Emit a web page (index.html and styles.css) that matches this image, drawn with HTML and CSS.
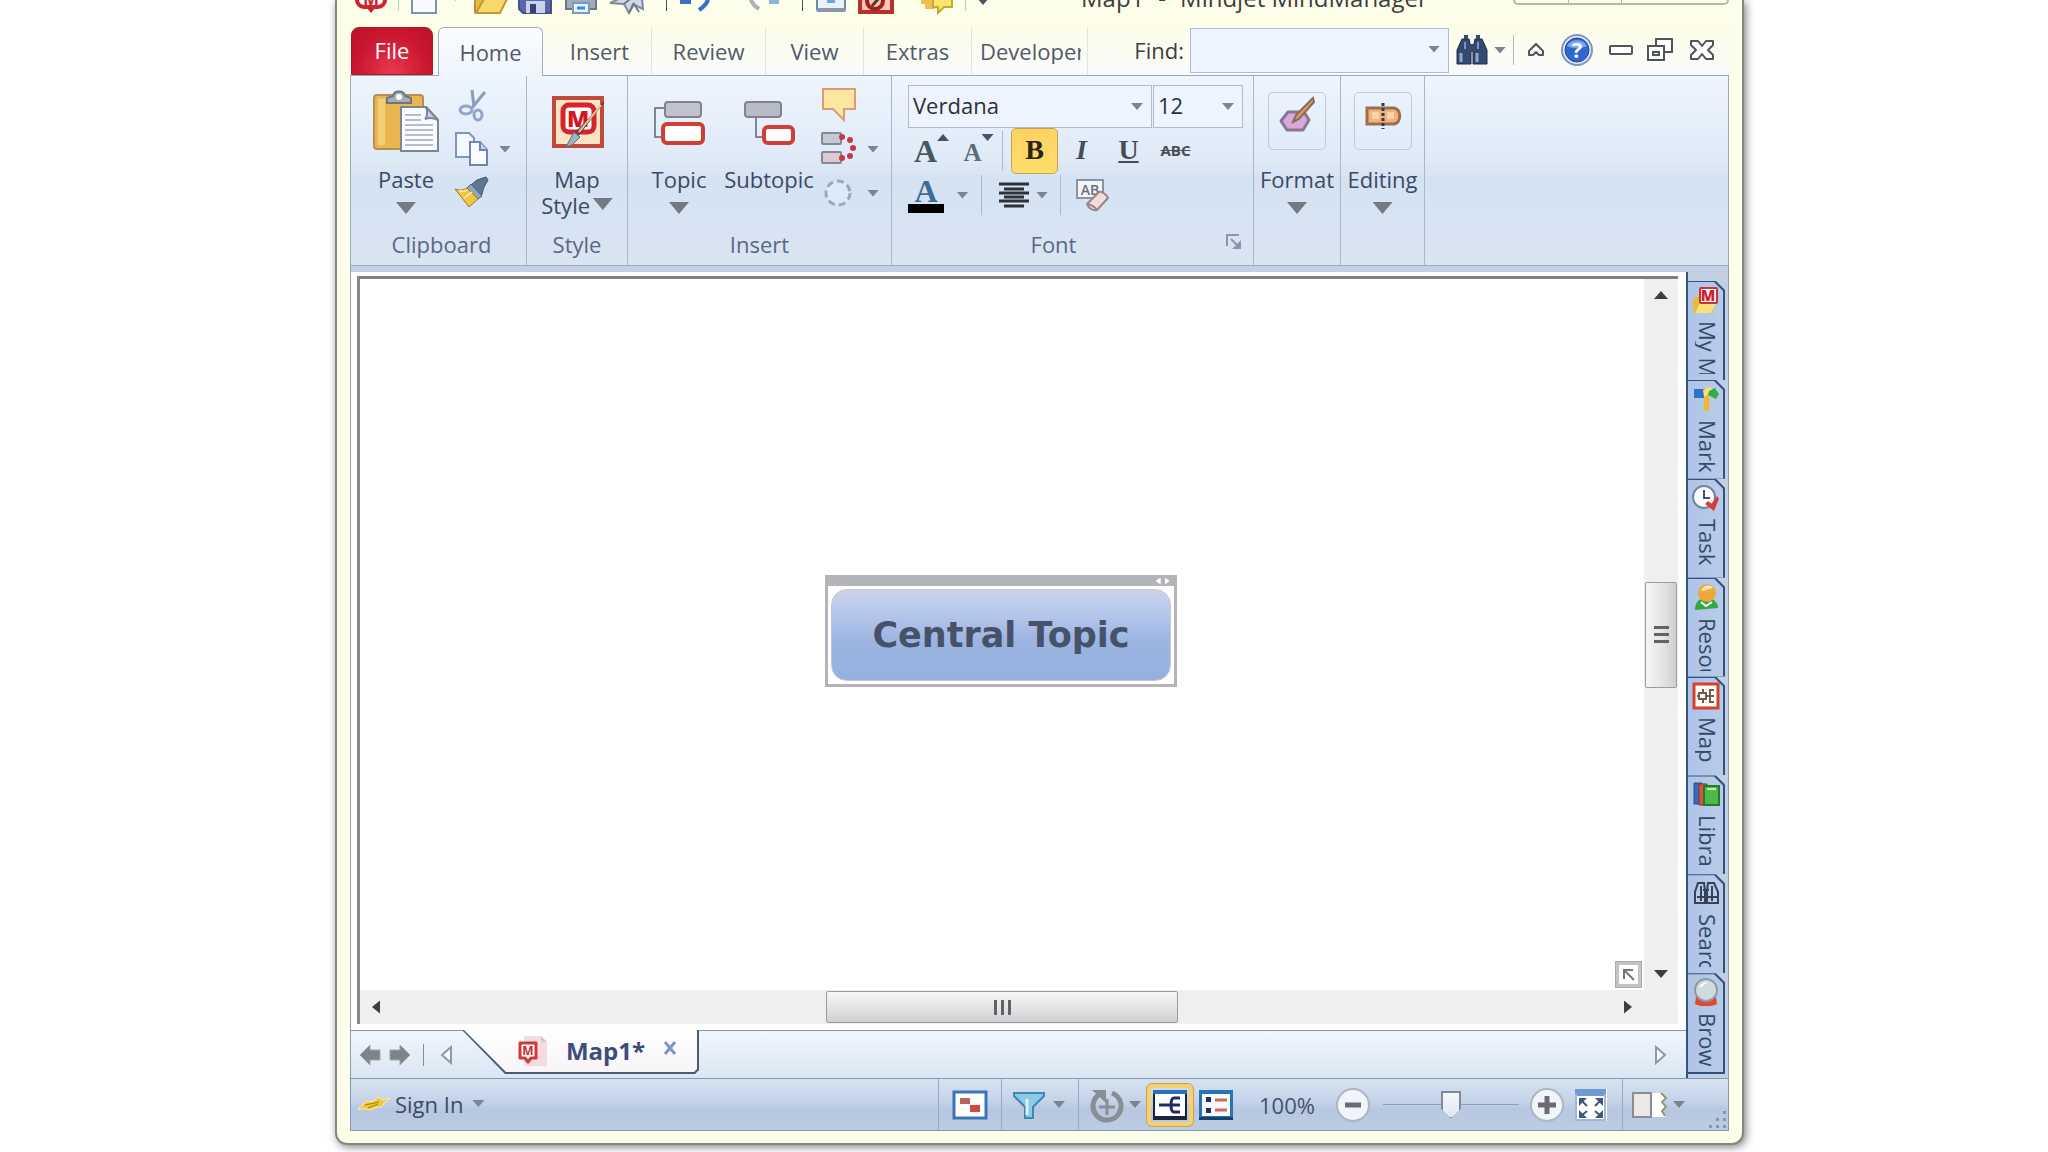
FILE: index.html
```html
<!DOCTYPE html>
<html lang="en">
<head>
  <meta charset="UTF-8" />
  <meta name="viewport" content="width=device-width, initial-scale=1" />
  <title>Map1 - Mindjet MindManager</title>
  <link rel="stylesheet" href="styles.css">
</head>
<body>
  <div class="window">

    <header class="titlebar">
      <div class="quick">
        <button aria-label="MindManager"><svg width="32" height="32" viewBox="0 0 32 32"><rect x="2" y="2" width="28" height="22" rx="7" fill="#fff" stroke="#d0242c" stroke-width="4"/><path d="M11 24l5 6 5-6" fill="#d0242c"/><text x="16" y="22" text-anchor="middle" font-family="Open Sans, sans-serif" font-weight="700" font-size="17" fill="#d0242c">M</text></svg></button>
        <i class="tick"></i>
        <button aria-label="New"><svg width="28" height="32" viewBox="0 0 28 32"><path d="M2 1h17l7 7v22H2z" fill="#f7fafe" stroke="#7d93b4" stroke-width="2"/></svg></button>
        <i class="tick space"></i>
        <button aria-label="Open"><svg width="36" height="32" viewBox="0 0 36 32"><path d="M2 30V8h9l3 4h15v6" fill="#e6b93e" stroke="#b9913a" stroke-width="2"/><path d="M3 30l8-14h23l-7 14z" fill="#f7d86b" stroke="#c29a34" stroke-width="2"/></svg></button>
        <button aria-label="Save"><svg width="36" height="32" viewBox="0 0 36 32"><path d="M2 1h32v29H6l-4-4z" fill="#5b68a6" stroke="#46508a" stroke-width="2"/><path d="M9 18h19v12H9z" fill="#c9d2e8"/><path d="M13 21h6v9h-6z" fill="#38427a"/></svg></button>
        <button class="gap-s" aria-label="Print"><svg width="34" height="32" viewBox="0 0 34 32"><path d="M2 14h30v12H2z" fill="#a3abb8" stroke="#6e7787" stroke-width="2"/><path d="M9 20h16v10H9z" fill="#e4f1ff" stroke="#7d98b8" stroke-width="2"/><path d="M13 25h8" stroke="#3d8bd0" stroke-width="3"/></svg></button>
        <button class="gap-s" aria-label="Send"><svg width="36" height="32" viewBox="0 0 36 32"><path d="M1 20L32 6l2 20-10-5-4 9-5-9z" fill="#d3d9e2" stroke="#7e8a9b" stroke-width="2"/><path d="M15 21L31 8M20 30l5-9 5 8" stroke="#6c7a8d" stroke-width="2" fill="none"/></svg></button>
        <i class="tick dark"></i>
        <button aria-label="Undo"><svg width="34" height="32" viewBox="0 0 34 32"><path d="M4 17c8-9 30-9 24 2-2 4-5 6-8 8" fill="none" stroke="#3c6cc4" stroke-width="4"/><path d="M1 19h11" stroke="#3c6cc4" stroke-width="4"/></svg></button>
        <button class="gap-l" aria-label="Redo"><svg width="34" height="32" viewBox="0 0 34 32"><path d="M30 17C20 8 0 10 5 19c2 4 4 5 7 7" fill="none" stroke="#a9b2bd" stroke-width="4"/><path d="M22 19h10" stroke="#8eb0dd" stroke-width="4"/></svg></button>
        <i class="tick dark"></i>
        <button aria-label="Send to"><svg width="32" height="32" viewBox="0 0 32 32"><rect x="2" y="2" width="28" height="26" rx="2" fill="#e9f1fa" stroke="#7389a5" stroke-width="2"/><path d="M2 25h28v4H2z" fill="#8898ac"/><path d="M12 14h8v6h-8z" fill="#6fa0d6"/></svg></button>
        <button class="gap-s" aria-label="Map style"><svg width="36" height="32" viewBox="0 0 36 32"><rect x="2" y="1" width="32" height="28" fill="#f7c6b8" stroke="#b92f2c" stroke-width="4"/><circle cx="17" cy="18" r="8" fill="none" stroke="#a32020" stroke-width="4"/><path d="M14 23L30 5" stroke="#5e3a2a" stroke-width="3"/></svg></button>
        <button class="gap-m" aria-label="Comments"><svg width="34" height="32" viewBox="0 0 34 32"><path d="M1 12h14v14H5v-5H1z" fill="#f2bd52"/><path d="M13 14h19v10h-8l-6 6v-6h-5z" fill="#fbe66a" stroke="#c9a838" stroke-width="2"/></svg></button>
        <i class="tick"></i>
        <button class="arrow-btn" aria-label="Customize"><i class="arrow dark"></i></button>
      </div>
      <div class="title"><span>Map1</span><span>-</span><span>Mindjet MindManager</span></div>
      <div class="caption-buttons"><button aria-label="Minimize"></button><button aria-label="Maximize"></button><button aria-label="Close"></button></div>
    </header>

    <div class="tabrow">
      <nav class="tabs">
        <button class="tab file">File</button>
        <button class="tab active">Home</button>
        <button class="tab">Insert</button>
        <button class="tab">Review</button>
        <button class="tab">View</button>
        <button class="tab">Extras</button>
        <button class="tab clipped"><span>Developer</span></button>
      </nav>
      <div class="find">
        <label for="find">Find:</label>
        <div class="combo"><input id="find" type="text"><i class="arrow"></i></div>
      </div>
      <div class="window-tools">
        <button aria-label="Search"><svg width="32" height="32" viewBox="0 0 32 32"><path d="M6 5h7l2 9v16H1V16zM19 5h7l5 11v14H17V14z" fill="#33496f" stroke="#1f2d48" stroke-width="1"/><path d="M8 1h4v4H8zM20 1h4v4h-4zM13 10h6v8h-6z" fill="#33496f"/><path d="M5 19v9M21 19v9" stroke="#8fa9cf" stroke-width="3"/><path d="M9 8v7M22 8v7" stroke="#7c96bd" stroke-width="2"/></svg></button>
        <button class="arrow-btn" aria-label="Search options"><i class="arrow"></i></button>
        <i class="bar"></i>
        <button class="collapse" aria-label="Collapse ribbon"><svg width="18" height="14" viewBox="0 0 18 14"><path d="M9 1l7 7v4h-4L9 9l-3 3H2V8z" fill="#fff" stroke="#50555c" stroke-width="2" stroke-linejoin="round"/></svg></button>
        <button class="help" aria-label="Help"><svg width="32" height="34" viewBox="0 0 32 34"><circle cx="16" cy="17" r="15" fill="#dfe9f8" stroke="#8295b8" stroke-width="2"/><circle cx="16" cy="17" r="12" fill="#2f66cf" stroke="#1f4aa8" stroke-width="1"/><path d="M6 13a11 10 0 0 1 20 0c-6 3-14 3-20 0" fill="#7da5ec"/><text x="16" y="25" text-anchor="middle" font-family="Open Sans, sans-serif" font-weight="700" font-size="22" fill="#fff">?</text></svg></button>
        <button class="min" aria-label="Minimize map"><svg width="24" height="12" viewBox="0 0 24 12"><rect x="1" y="2" width="22" height="8" rx="1" fill="#fff" stroke="#50555c" stroke-width="2"/></svg></button>
        <button class="restore" aria-label="Restore map"><svg width="26" height="26" viewBox="0 0 26 26"><path d="M9 2h16v13H9z" fill="#fff" stroke="#50555c" stroke-width="2"/><path d="M1 9h16v14H1z" fill="#fff" stroke="#50555c" stroke-width="2"/><path d="M6 15h6v3H6z" fill="#fff" stroke="#50555c" stroke-width="2"/></svg></button>
        <button class="close" aria-label="Close map"><svg width="26" height="22" viewBox="0 0 26 22"><path d="M2 2h7l4 5 4-5h7v4l-5 5 5 5v4h-7l-4-5-4 5H2v-4l5-5-5-5z" fill="#fff" stroke="#50555c" stroke-width="2" stroke-linejoin="round"/></svg></button>
      </div>
    </div>

    <div class="ribbon">
      <section class="group clipboard">
        <div class="group-body">
          <button class="big">
            <svg width="66" height="64" viewBox="0 0 66 64"><rect x="1" y="5" width="49" height="54" rx="3" fill="#eab650" stroke="#b38f52" stroke-width="2"/><path d="M5 9h7v46H5z" fill="#f4cd79"/><path d="M14 13V8l6-2c1-6 11-6 12 0l6 2v5z" fill="#a9adb8" stroke="#70747f" stroke-width="2"/><circle cx="26" cy="7" r="3" fill="#fff"/><path d="M28 17h25l12 13v31H28z" fill="#f8fbff" stroke="#7a8599" stroke-width="2"/><path d="M53 17c2 5 1 10-1 12 5-2 9-1 13 1z" fill="#c3d0e2" stroke="#7a8599" stroke-width="2"/><path d="M32 25h16M32 30h16M32 35h28M32 40h28M32 45h28M32 50h28M32 55h28" stroke="#b7bec9" stroke-width="2"/></svg>
            <span>Paste</span>
            <i class="arrow large"></i>
          </button>
          <div class="small-tools">
            <div class="row"><button aria-label="Cut"><svg width="36" height="34" viewBox="0 0 36 34"><path d="M19 2l2 17M32 4L18 21" stroke="#8b9dbd" stroke-width="3"/><ellipse cx="13" cy="22" rx="6" ry="4" fill="none" stroke="#93a6c8" stroke-width="3"/><ellipse cx="25" cy="27" rx="4" ry="5" fill="none" stroke="#93a6c8" stroke-width="3"/></svg></button></div>
            <div class="row"><button aria-label="Copy"><svg width="36" height="36" viewBox="0 0 36 36"><path d="M3 2h13l5 5v19H3z" fill="#f5f9ff" stroke="#7f97bb" stroke-width="2"/><path d="M17 11h10l7 8v15H17z" fill="#f8fbff" stroke="#6f87b0" stroke-width="2"/><path d="M27 11v8h7" fill="#c4d3ea" stroke="#6f87b0" stroke-width="2"/></svg></button><button class="arrow-btn" aria-label="Copy options"><i class="arrow"></i></button></div>
            <div class="row"><button aria-label="Format painter"><svg width="36" height="34" viewBox="0 0 36 34"><path d="M18 9l6-5 9-3 2 3-4 7-3 10z" fill="#5d7795" stroke="#40546f" stroke-width="1"/><path d="M18 8l11 12-4 3L14 12z" fill="#8fa4bd" stroke="#4f6076" stroke-width="1"/><path d="M14 12l11 11-9 8L2 13c5 2 8 1 12-1z" fill="#f0c544" stroke="#9b7b23" stroke-width="1"/><path d="M6 15c4 1 6 0 8-1M11 22l8-6" stroke="#fbe79a" stroke-width="2" fill="none"/></svg></button></div>
          </div>
        </div>
        <div class="group-name"><span>Clipboard</span></div>
      </section>

      <section class="group style">
        <div class="group-body">
          <button class="big">
            <svg width="56" height="58" viewBox="0 0 56 58"><rect x="5" y="5" width="48" height="48" fill="#fbe5c4" stroke="#bf4a3c" stroke-width="4"/><rect x="14" y="12" width="31" height="27" rx="6" fill="#fff" stroke="#d9232b" stroke-width="5"/><text x="29" y="34" text-anchor="middle" font-family="Open Sans, sans-serif" font-weight="800" font-size="23" fill="#d9151f">M</text><path d="M55 9L29 43l-5 4 2-7z" fill="#7a4a3a" stroke="#4e3630" stroke-width="1"/><path d="M52 12L30 39" stroke="#e7c08e" stroke-width="2"/><path d="M25 39l6 5-8 8-6 2z" fill="#9cb3c4" stroke="#5e6c79" stroke-width="1"/></svg>
            <span>Map<br>Style <i class="arrow large"></i></span>
          </button>
        </div>
        <div class="group-name"><span>Style</span></div>
      </section>

      <section class="group insert">
        <div class="group-body">
          <button class="big topic-btn">
            <svg width="54" height="50" viewBox="0 0 54 50"><path d="M12 11H3v29h9" fill="none" stroke="#7f8594" stroke-width="2"/><rect x="13" y="5" width="36" height="15" rx="3" fill="#c0c3ce" stroke="#80838f" stroke-width="2"/><rect x="11" y="27" width="40" height="19" rx="4" fill="#fff" stroke="#cf3f35" stroke-width="4"/></svg>
            <span>Topic</span>
            <i class="arrow large"></i>
          </button>
          <button class="big subtopic-btn">
            <svg width="54" height="50" viewBox="0 0 54 50"><path d="M14 20v20h10" fill="none" stroke="#7f8594" stroke-width="2"/><rect x="3" y="5" width="36" height="15" rx="3" fill="#b9bcc8" stroke="#80838f" stroke-width="2"/><rect x="22" y="30" width="29" height="16" rx="4" fill="#fff" stroke="#cf3f35" stroke-width="4"/></svg>
            <span>Subtopic</span>
          </button>
          <div class="small-tools">
            <div class="row"><button aria-label="Callout"><svg width="36" height="36" viewBox="0 0 36 36"><path d="M2 2h32v20H23v11L12 22H2z" fill="#fce6a0" stroke="#dd9a78" stroke-width="2"/></svg></button></div>
            <div class="row"><button aria-label="Relationship"><svg width="36" height="36" viewBox="0 0 36 36"><rect x="1" y="2" width="19" height="11" rx="1" fill="#c6c9d2" stroke="#858995" stroke-width="2"/><rect x="1" y="21" width="19" height="11" rx="1" fill="#dcc9d3" stroke="#858995" stroke-width="2"/><g fill="#c23a42"><circle cx="21" cy="6" r="3"/><circle cx="29" cy="9" r="3"/><circle cx="32" cy="17" r="3"/><circle cx="29" cy="25" r="3"/><circle cx="21" cy="27" r="3"/></g></svg></button><button class="arrow-btn" aria-label="Relationship options"><i class="arrow"></i></button></div>
            <div class="row"><button aria-label="Boundary"><svg width="36" height="36" viewBox="0 0 36 36"><circle cx="17" cy="18" r="12" fill="#dcebfa" stroke="#93a9c6" stroke-width="3" stroke-dasharray="7 4"/></svg></button><button class="arrow-btn" aria-label="Boundary options"><i class="arrow"></i></button></div>
          </div>
        </div>
        <div class="group-name"><span>Insert</span></div>
      </section>

      <section class="group font">
        <div class="group-body">
          <div class="font-row selects">
            <div class="combo family"><select aria-label="Font"><option>Verdana</option></select><i class="arrow"></i></div>
            <div class="combo size"><select aria-label="Font size"><option>12</option></select><i class="arrow"></i></div>
          </div>
          <div class="font-row formats">
            <button class="grow" aria-label="Grow font"><b>A</b><i class="arrow dark up"></i></button>
            <button class="shrink" aria-label="Shrink font"><b>A</b><i class="arrow dark"></i></button>
            <i class="bar"></i>
            <button class="bold on"><b>B</b></button>
            <button class="italic"><em>I</em></button>
            <button class="underline"><u>U</u></button>
            <button class="strike"><s>ABC</s></button>
          </div>
          <div class="font-row colors">
            <button class="color" aria-label="Font color"><b>A</b></button>
            <button class="arrow-btn wide" aria-label="Font colors"><i class="arrow"></i></button>
            <i class="bar"></i>
            <button class="align" aria-label="Align"><svg width="32" height="28" viewBox="0 0 32 28"><path d="M1 3h30M6 8h20M1 12h30M6 16h20M1 20h30M6 25h20" stroke="#2d3138" stroke-width="3"/></svg></button>
            <button class="arrow-btn" aria-label="Alignments"><i class="arrow"></i></button>
            <i class="bar"></i>
            <button class="clear" aria-label="Clear formatting"><svg width="36" height="36" viewBox="0 0 36 36"><rect x="2" y="3" width="26" height="18" fill="#f3f5f9" stroke="#8c93a0" stroke-width="2"/><text x="15" y="18" text-anchor="middle" font-family="Open Sans, sans-serif" font-weight="600" font-size="14" fill="#6a707b">AB</text><path d="M12 27l12-12c3-1 8 3 9 6L22 33c-4 1-9-2-10-6z" fill="#f2dcd9" stroke="#978488" stroke-width="2"/><path d="M12 27c3 0 8 3 10 6" fill="none" stroke="#978488" stroke-width="2"/></svg></button>
          </div>
        </div>
        <div class="group-name"><span>Font</span><button class="launcher" aria-label="Font settings"><svg width="16" height="16" viewBox="0 0 16 16"><path d="M1 12V1h12" fill="none" stroke="#8a97ab" stroke-width="2"/><path d="M5 5l6 6" stroke="#8a97ab" stroke-width="2"/><path d="M15 6v9H6z" fill="#8a97ab"/></svg></button></div>
      </section>

      <section class="group format">
        <div class="group-body">
          <button class="big">
            <span class="frame"><svg width="38" height="38" viewBox="0 0 38 38"><path d="M10 16h16l5 8-6 10H9l-6-9z" fill="#d9a9dc" stroke="#8d7398" stroke-width="3" stroke-linejoin="round"/><path d="M35 2l1 4-15 17-6 3 3-7z" fill="#d69a5e" stroke="#8a6a58" stroke-width="2"/></svg></span>
            <span>Format</span>
            <i class="arrow large"></i>
          </button>
        </div>
      </section>

      <section class="group editing">
        <div class="group-body">
          <button class="big">
            <span class="frame"><svg width="38" height="38" viewBox="0 0 38 38"><path d="M3 12h26c9 0 9 16 0 16H3z" fill="#f3b27c" stroke="#96714f" stroke-width="3"/><path d="M8 16h7v7H8zM23 16h7v7h-7z" fill="#fbd3a8"/><path d="M19 7v26" stroke="#333a48" stroke-width="3" stroke-dasharray="3 2"/></svg></span>
            <span>Editing</span>
            <i class="arrow large"></i>
          </button>
        </div>
      </section>
    </div>

    <div class="workspace">
      <main class="document">
        <div class="pane">
          <div class="canvas">
            <div class="topic-frame">
              <div class="topic-handle"><i class="arrow left"></i><i class="arrow right"></i></div>
              <div class="topic">Central Topic</div>
            </div>
            <button class="overview" aria-label="Map overview"><svg width="16" height="16" viewBox="0 0 16 16"><path d="M3 12V3h9M3 3l10 10" fill="none" stroke="#777" stroke-width="2"/></svg></button>
          </div>
          <div class="scroll vertical">
            <button aria-label="Scroll up"><i class="arrow scroll-up"></i></button>
            <div class="thumb"><i></i><i></i><i></i></div>
            <button aria-label="Scroll down"><i class="arrow scroll-down"></i></button>
          </div>
          <div class="scroll horizontal">
            <button aria-label="Scroll left"><i class="arrow left"></i></button>
            <div class="thumb"><i></i><i></i><i></i></div>
            <button aria-label="Scroll right"><i class="arrow right"></i></button>
          </div>
          <div class="corner"></div>
        </div>
        <div class="doc-tabs">
          <div class="doc-nav">
            <button aria-label="Back"><svg width="22" height="22" viewBox="0 0 22 22"><path d="M1 11L11 1v5h10v10H11v5z" fill="#7f8489" stroke="#9fa5ab" stroke-width="1"/></svg></button>
            <button aria-label="Forward"><svg width="22" height="22" viewBox="0 0 22 22"><path d="M21 11L11 1v5H1v10h10v5z" fill="#7f8489" stroke="#9fa5ab" stroke-width="1"/></svg></button>
            <i class="bar"></i>
            <button aria-label="First map"><svg width="12" height="20" viewBox="0 0 12 20"><path d="M11 2v16L2 10z" fill="#f5f8fc" stroke="#9298a1" stroke-width="2"/></svg></button>
          </div>
          <div class="doc-tab">
            <div class="doc-tab-inner">
              <svg width="30" height="30" viewBox="0 0 30 30"><path d="M6 0h17l6 6v24H6z" fill="#f5dcdc"/><path d="M23 0v6h6z" fill="#cfc9cc"/><path d="M2 7h16v15h-5l-3 4-3-4H2z" fill="#fff" stroke="#cc3a3a" stroke-width="3" stroke-linejoin="round"/><text x="10" y="19" text-anchor="middle" font-family="Open Sans, sans-serif" font-weight="700" font-size="12" fill="#cc2a2a">M</text></svg>
              <span>Map1*</span>
              <button aria-label="Close tab"><svg width="14" height="14" viewBox="0 0 14 14"><path d="M2 1l10 12M12 1L2 13" stroke="#8094c6" stroke-width="3"/></svg></button>
            </div>
          </div>
          <button class="doc-next" aria-label="Next map"><svg width="12" height="20" viewBox="0 0 12 20"><path d="M1 2v16l9-8z" fill="#f5f8fc" stroke="#9298a1" stroke-width="2"/></svg></button>
        </div>
      </main>

      <aside class="side-tabs">
        <button><span class="face"><svg width="28" height="28" viewBox="0 0 28 28"><path d="M1 27V12l5-2 3 3h12v14z" fill="#e8bb3c"/><path d="M3 27l5-10h16l-5 10z" fill="#fbe07c"/><rect x="8" y="2" width="17" height="15" rx="1" fill="#fff" stroke="#cf2f3b" stroke-width="2"/><text x="16" y="15" text-anchor="middle" font-family="Open Sans, sans-serif" font-weight="800" font-size="15" fill="#d4202e">M</text></svg><span class="name">My Maps</span></span></button>
        <button><span class="face"><svg width="28" height="28" viewBox="0 0 28 28"><path d="M2 4h12v9H2z" fill="#2c72c8"/><path d="M12 5h5v21h-5z" fill="#f3b72e"/><path d="M11 5l7-3 3 4-9 6z" fill="#f9e26a"/><path d="M17 6l6-3 4 6-3 5-8-4z" fill="#35ad45"/></svg><span class="name">Markers</span></span></button>
        <button><span class="face"><svg width="28" height="28" viewBox="0 0 28 28"><circle cx="12" cy="13" r="11" fill="#fff" stroke="#7384a4" stroke-width="2"/><path d="M12 6v8h6" fill="none" stroke="#3e5277" stroke-width="2"/><path d="M13 20l3-3 4 3 5-8 2 3-5 12z" fill="#d93c3c"/></svg><span class="name">Task Info</span></span></button>
        <button><span class="face"><svg width="28" height="28" viewBox="0 0 28 28"><path d="M3 27c0-9 5-12 11-12 7 0 12 4 12 10z" fill="#35a83f"/><circle cx="15" cy="10" r="9" fill="#eda83c"/><path d="M9 8c2-6 9-7 12-3-4 0-5 3-12 3z" fill="#fde6a8"/><path d="M9 19l5 4 6-4" stroke="#fff" stroke-width="2" fill="none"/></svg><span class="name">Resources</span></span></button>
        <button><span class="face"><svg width="28" height="28" viewBox="0 0 28 28"><rect x="2" y="2" width="24" height="24" fill="#fffaf2" stroke="#d6402f" stroke-width="3"/><path d="M7 11h7v6H7zM5 14h2M14 14h4M22 8h-4v12h4M18 14h4M11 7v4M11 17v4" fill="none" stroke="#715c56" stroke-width="2"/></svg><span class="name">Map</span></span></button>
        <button><span class="face"><svg width="28" height="28" viewBox="0 0 28 28"><path d="M2 3h8v21H2z" fill="#2b6fc0" stroke="#234c86"/><path d="M7 4h8v21H7z" fill="#e0503a" stroke="#8e3222"/><path d="M12 6h15v19H12z" fill="#50b848" stroke="#1f7b33" stroke-width="2"/><path d="M15 9h9" stroke="#b9efa9" stroke-width="2"/></svg><span class="name">Library</span></span></button>
        <button><span class="face"><svg width="28" height="28" viewBox="0 0 28 28"><path d="M6 4h6l1 8v12H3V13zM16 4h6l4 9v11H15V12z" fill="#b9cbe4" stroke="#33415c" stroke-width="2"/><path d="M11 11h6M9 7v15M20 7v15M5 18h20" stroke="#33415c" stroke-width="2"/></svg><span class="name">Search</span></span></button>
        <button><span class="face"><svg width="28" height="28" viewBox="0 0 28 28"><path d="M4 19h20l1 7c-5 3-17 3-22 0z" fill="#df4a2c"/><circle cx="14" cy="12" r="11" fill="#cfdcdf" stroke="#8e9da5" stroke-width="2"/><path d="M7 10c2-5 6-6 9-6-3 2-5 4-9 6z" fill="#fff"/></svg><span class="name">Browser</span></span></button>
      </aside>
    </div>

    <footer class="status">
      <button class="signin"><svg width="34" height="20" viewBox="0 0 34 20"><path d="M1 15l9-8 6 1 5-5 4 3 8-2-5 4-4 5-7 1-3 2-5-1z" fill="#f0c832" stroke="#fff1a8" stroke-width="1"/><path d="M8 11l14-3M11 14l10-4" stroke="#a87c10" stroke-width="1"/></svg><span>Sign In</span><i class="arrow"></i></button>
      <div class="status-tools">
        <div class="cell overview-cell"><button aria-label="Overview"><svg width="36" height="30" viewBox="0 0 36 30"><rect x="2" y="2" width="32" height="26" fill="#fff" stroke="#3b72b8" stroke-width="3"/><path d="M8 8h10v6H8z" fill="#b5665e"/><path d="M18 15h10v7H18z" fill="#d0483e"/></svg></button></div>
        <div class="cell filter-cell"><button aria-label="Filter"><svg width="32" height="28" viewBox="0 0 32 28"><path d="M1 2h30v3L20 16v11h-8V16L1 5z" fill="#8ccbe8" stroke="#3e86b4" stroke-width="2"/><path d="M14 8v16" stroke="#d6f1fb" stroke-width="3"/></svg></button><button class="arrow-btn" aria-label="Filter options"><i class="arrow"></i></button></div>
        <div class="cell last">
          <button aria-label="Refresh"><svg width="36" height="36" viewBox="0 0 36 36"><path d="M23 6a14 14 0 1 1-12 1" fill="none" stroke="#8a8d93" stroke-width="5"/><path d="M3 3h14v13z" fill="#8a8d93"/><path d="M18 12v16M10 20h16" stroke="#8a8d93" stroke-width="3"/></svg></button>
          <button class="arrow-btn" aria-label="Refresh options"><i class="arrow"></i></button>
          <button class="view on" aria-label="Map view"><svg width="36" height="32" viewBox="0 0 36 32"><path d="M1 1h34v30H1z" fill="#17253f"/><path d="M1 1h34v4H1z" fill="#2a70b8"/><path d="M3 5h30v22H3z" fill="#fff"/><path d="M7 16h12M28 9h-6c-4 0-4 14 0 14h6M19 16h9" fill="none" stroke="#1f2a6b" stroke-width="3"/></svg></button>
          <button class="view" aria-label="Outline view"><svg width="36" height="32" viewBox="0 0 36 32"><path d="M1 1h34v30H1z" fill="#2673b5"/><path d="M1 28h34v3H1z" fill="#174069"/><path d="M4 5h28v22H4z" fill="#f5fafd"/><path d="M8 8h5v5H8zM8 19h5v5H8z" fill="#272d66"/><path d="M17 11h12M17 21h12" stroke="#cf6a55" stroke-width="3"/></svg></button>
          <span class="percent">100%</span>
          <button aria-label="Zoom out"><svg width="36" height="36" viewBox="0 0 36 36"><circle cx="18" cy="18" r="16" fill="#f1f4f9" stroke="#b0b6c0" stroke-width="2"/><path d="M10 18h16" stroke="#6e6a73" stroke-width="5"/></svg></button>
          <input class="zoom" type="range" min="0" max="100" value="50" aria-label="Zoom">
          <button aria-label="Zoom in"><svg width="36" height="36" viewBox="0 0 36 36"><circle cx="18" cy="18" r="16" fill="#f1f4f9" stroke="#b0b6c0" stroke-width="2"/><path d="M9 18h18M18 9v18" stroke="#6e6a73" stroke-width="5"/></svg></button>
          <button class="fit" aria-label="Fit map"><svg width="32" height="32" viewBox="0 0 32 32"><path d="M0 0h32v32H0z" fill="#fff"/><path d="M0 0h31v7H0z" fill="#6e9bd6"/><path d="M1 5v26h29V5" fill="none" stroke="#9fb9da" stroke-width="2"/><path d="M4 9h8L4 17zM28 9h-8l8 8zM4 29h8l-8-8zM28 29h-8l8-8z" fill="#41577c"/><path d="M6 11l6 6M26 11l-6 6M6 27l6-5M26 27l-6-5" stroke="#41577c" stroke-width="2"/></svg></button>
          <i class="bar tall"></i>
          <button class="split" aria-label="Split view"><svg width="38" height="28" viewBox="0 0 38 28"><path d="M2 2h28l6 5-5 4 5 5-5 4 4 6H2z" fill="#fff"/><path d="M2 2h18v24H2z" fill="#ebe8e6" stroke="#888d93" stroke-width="2"/><path d="M30 2l5 5-4 4 4 5-4 4 3 5" fill="none" stroke="#8f9878" stroke-width="2"/></svg></button>
          <button class="arrow-btn" aria-label="Split options"><i class="arrow"></i></button>
          <svg class="grip" width="20" height="20" viewBox="0 0 20 20"><path d="M15 1h3v3h-3zM8 8h3v3H8zM15 8h3v3h-3zM1 15h3v3H1zM8 15h3v3H8zM15 15h3v3h-3z" fill="#8795ae"/></svg>
        </div>
      </div>
    </footer>
  </div>
</body>
</html>
```
FILE: styles.css
```css
* {
  box-sizing: border-box;
}
body {
  margin: 0;
  min-height: 100vh;
  display: grid;
  grid-template-columns: 335fr 1409fr 304fr;
  background: #fff;
  font-family: "Open Sans", "Noto Sans", sans-serif;
  font-size: 22px;
  line-height: 26px;
  color: #3b4a63;
  overflow: hidden;
}
button, input, select {
  font: inherit;
  color: inherit;
  margin: 0;
  padding: 0;
  border: 0;
  background: none;
}
button {
  display: flex;
  align-items: center;
  justify-content: center;
  flex-shrink: 0;
  cursor: pointer;
}
svg {
  display: block;
  flex-shrink: 0;
}
.window {
  grid-column: 2;
  display: flex;
  flex-direction: column;
  margin-bottom: 7px;
  padding: 0 13px 12px;
  border: 2px solid #85877f;
  border-top: 0;
  border-radius: 0 0 12px 12px;
  background: #fdfee9;
  box-shadow: 2px 2px 8px rgba(0, 0, 0, 0.5);
}

/* small triangles */
.arrow {
  display: inline-block;
  flex-shrink: 0;
  width: 12px;
  height: 7px;
  background: #7b8491;
  clip-path: polygon(0 0, 100% 0, 50% 100%);
}
.arrow.large {
  width: 20px;
  height: 12px;
  background: #747b80;
}
.arrow.dark {
  background: #4a535c;
}
.arrow.up {
  clip-path: polygon(50% 0, 100% 100%, 0 100%);
}
.arrow-btn {
  width: 12px;
}
.bar {
  width: 1px;
  height: 40px;
  flex-shrink: 0;
  background: #a9b9cf;
}

/* title bar */
.titlebar {
  display: flex;
  align-items: flex-end;
  height: 27px;
  padding: 0 0 12px 5px;
}
.quick {
  display: flex;
  align-items: flex-end;
  height: 15px;
  gap: 8px;
}
.quick button {
  align-items: flex-end;
}
.quick .gap-s {
  margin-left: 3px;
}
.quick .gap-m {
  margin-left: 18px;
}
.quick .gap-l {
  margin-left: 26px;
}
.tick {
  width: 1px;
  height: 12px;
  margin: 0 3px 4px;
  background: #c8c9b8;
}
.tick.dark {
  margin: 0 4px 4px 13px;
  background: #4b4f52;
}
.tick.space {
  margin: 0 9px 14px;
}
.quick .arrow-btn {
  padding-bottom: 10px;
}
.title {
  display: flex;
  gap: 14px;
  margin: 0 0 2px 92px;
  font-size: 24px;
  line-height: 30px;
  color: #3c3d3c;
  white-space: nowrap;
}
.caption-buttons {
  display: flex;
  align-self: flex-start;
  width: 216px;
  height: 5px;
  margin-left: auto;
  border: 2px solid #b5b7a8;
  border-top: 0;
  border-radius: 0 0 6px 6px;
}
.caption-buttons button {
  flex: 1;
  border-right: 1px solid #b5b7a8;
}
.caption-buttons button:last-child {
  flex: 2;
  border-right: 0;
}

/* tabs */
.tabrow {
  display: flex;
  height: 48px;
  background: linear-gradient(#fdfde9, #f9fbfb);
}
.tabs {
  display: grid;
  grid-template-columns: 83px 115px 104px 114px 98px 108px 116px;
}
.tab {
  border-right: 1px solid #e2e5e3;
  color: #51596a;
}
.tab.file {
  margin-left: 1px;
  border: 1px solid #b01528;
  border-radius: 8px 8px 0 0;
  background: radial-gradient(ellipse at 50% 100%, #ea3a52, #cc1730 60%, #b81229);
  color: #fff;
  padding-bottom: 2px;
}
.tab.active {
  z-index: 1;
  margin: 0 5px -1px;
  border: 1px solid #a3adbd;
  border-bottom: 0;
  border-radius: 6px 6px 0 0;
  background: linear-gradient(#fbfdfe, #eef5fd);
}
.tab.clipped {
  justify-content: flex-start;
  padding-left: 8px;
}
.tab.clipped span {
  width: 101px;
  text-align: left;
  overflow: hidden;
}
.find {
  display: flex;
  flex: 1;
  align-items: center;
  justify-content: flex-end;
  gap: 6px;
  height: 46px;
  color: #3b3e42;
}
.combo {
  position: relative;
  border: 1px solid #adbdd1;
  background: #edf4fd;
}
.combo input, .combo select {
  width: 100%;
  height: 100%;
  padding: 0 0 3px 4px;
  appearance: none;
  outline: 0;
  color: #2b3038;
}
.combo .arrow {
  position: absolute;
  right: 8px;
  top: 17px;
  pointer-events: none;
}
.find .combo {
  width: 259px;
  height: 45px;
}
.window-tools {
  display: flex;
  align-items: center;
  height: 46px;
  padding: 0 14px 0 7px;
}
.window-tools .arrow-btn {
  margin: 0 7px 0 6px;
}
.window-tools .bar {
  height: 30px;
}
.window-tools .collapse {
  margin: 0 16px 0 13px;
}
.window-tools .min {
  margin: 0 14px 0 16px;
}
.window-tools .close {
  margin-left: 16px;
}

/* ribbon */
.ribbon {
  display: flex;
  height: 191px;
  border: 1px solid #9aa9bc;
  background: linear-gradient(#edf5fe, #dfeaf7 45%, #d5e2f2 55%, #d9e5f3);
}
.group {
  display: flex;
  flex-direction: column;
  flex-shrink: 0;
  border-right: 1px solid #a9b7ca;
}
.group-body {
  display: flex;
  flex: 1;
}
.group-name {
  display: flex;
  height: 36px;
  line-height: 30px;
  color: #5a6884;
}
.group-name span {
  flex: 1;
  text-align: center;
}
.clipboard {
  width: 176px;
}
.clipboard .group-name {
  padding-left: 6px;
}
.style {
  width: 101px;
}
.insert {
  width: 264px;
}
.font {
  width: 362px;
}
.format {
  width: 87px;
}
.editing {
  width: 84px;
}
.big {
  flex-direction: column;
  justify-content: flex-start;
  padding-top: 14px;
  white-space: nowrap;
}
.big > svg, .frame {
  height: 64px;
}
.big > span {
  margin-top: 12px;
}
.big > .arrow {
  margin-top: 10px;
}
.big > .frame {
  display: flex;
  align-items: center;
  justify-content: center;
  width: 58px;
  height: 58px;
  margin: 2px 0 4px;
  padding-bottom: 12px;
  border: 1px solid #bccadc;
  border-radius: 5px;
}
.style .big, .format .big, .editing .big {
  width: 100%;
}
.style .arrow {
  vertical-align: 4px;
  margin-left: -3px;
}
.clipboard .big {
  width: 70px;
  margin: 0 12px 0 20px;
}
.topic-btn {
  width: 72px;
  margin-left: 15px;
}
.subtopic-btn {
  width: 96px;
  margin-left: 6px;
}
.small-tools {
  display: grid;
  grid-template-rows: repeat(3, 44px);
  padding-top: 7px;
}
.insert .small-tools {
  margin-left: 4px;
}
.row {
  display: flex;
  gap: 10px;
}
.font .group-body {
  flex-direction: column;
  padding: 9px 0 0 16px;
}
.font-row {
  display: flex;
  align-items: center;
  height: 44px;
}
.font-row b, .font-row em, .font-row u {
  font-family: "Liberation Serif", serif;
  font-weight: bold;
}
.selects {
  gap: 1px;
  height: 43px;
}
.selects .combo {
  height: 43px;
}
.family {
  width: 244px;
}
.size {
  width: 90px;
}
.formats {
  height: 46px;
}
.formats button {
  width: 47px;
  height: 46px;
  padding-bottom: 2px;
  font-size: 28px;
  color: #454c57;
}
.formats .grow, .formats .shrink {
  padding-bottom: 16px;
}
.font-row .grow b {
  font-size: 32px;
  margin-top: 16px;
  color: #45585f;
}
.font-row .shrink b {
  font-size: 25px;
  margin-top: 20px;
  color: #5d6b75;
}
.formats .arrow {
  align-self: flex-start;
  margin-top: 6px;
}
.formats .bar {
  margin-right: 8px;
}
.formats .bold {
  border: 1px solid #c5a350;
  border-radius: 5px;
  background: linear-gradient(#fdd262, #fede6c);
  color: #2a241a;
}
.formats .strike {
  font-size: 15px;
  font-weight: 700;
  color: #4b4f57;
}
.colors {
  height: 42px;
}
.color {
  width: 36px;
  height: 36px;
  border-bottom: 9px solid #000;
}
.color b {
  font-size: 32px;
  color: #3b6d97;
}
.arrow-btn.wide {
  width: 37px;
}
.align {
  width: 54px;
  padding-left: 10px;
}
.clear {
  margin-left: 14px;
}
.colors .arrow-btn:not(.wide) {
  margin-right: 12px;
}
.launcher {
  width: 38px;
  height: 26px;
}

/* document */
.workspace {
  display: flex;
  flex: 1;
  border-left: 1px solid #8d9bb0;
  border-right: 1px solid #8d9bb0;
  background: #c3d0e4;
}
.document {
  display: flex;
  flex: 1;
  flex-direction: column;
  margin-top: 6px;
  border-right: 2px solid #31557c;
  background: #fff;
}
.pane {
  display: grid;
  flex: 1;
  grid-template-columns: 1fr 34px;
  grid-template-rows: 1fr 34px;
  margin: 4px 8px 6px 6px;
  border-top: 3px solid #7e8085;
  border-left: 3px solid #85878d;
}
.canvas {
  position: relative;
  display: flex;
  align-items: center;
  justify-content: center;
  padding: 0 2px 8px 0;
  background: #fff;
}
.topic-frame {
  border: 3px solid #b3b4b7;
  border-top: 0;
}
.topic-handle {
  display: flex;
  justify-content: flex-end;
  gap: 4px;
  height: 11px;
  padding: 3px 4px;
  background: #b3b4b7;
}
.topic-handle .arrow {
  width: 5px;
  height: 7px;
  background: #fff;
}
.arrow.left {
  clip-path: polygon(100% 0, 100% 100%, 0 50%);
}
.arrow.right {
  clip-path: polygon(0 0, 0 100%, 100% 50%);
}
.topic {
  margin: 3px;
  padding: 24px 40px;
  border: 1px solid #c3c6da;
  border-radius: 16px;
  background: linear-gradient(#cdd1e8, #bccbed 18%, #a9bde6 42%, #9cb5e1 55%, #94b1de);
  font-family: "DejaVu Sans", sans-serif;
  font-size: 35px;
  font-weight: bold;
  line-height: 42px;
  color: #465269;
}
.overview {
  position: absolute;
  right: 2px;
  bottom: 2px;
  width: 27px;
  height: 27px;
  border: 4px solid #c4c4c4;
  outline: 1px solid #aaa;
  outline-offset: -1px;
  background: #fff;
}
.scroll, .corner {
  background: #efeff0;
}
.scroll {
  display: flex;
  align-items: center;
  justify-content: space-between;
}
.vertical {
  flex-direction: column;
}
.scroll > button {
  width: 32px;
  height: 32px;
}
.scroll .arrow {
  width: 8px;
  height: 13px;
  background: #3c3d40;
}
.scroll .scroll-up {
  width: 14px;
  height: 8px;
  clip-path: polygon(50% 0, 100% 100%, 0 100%);
}
.scroll .scroll-down {
  width: 14px;
  height: 8px;
}
.thumb {
  display: flex;
  align-items: center;
  justify-content: center;
  gap: 4px;
  border: 1px solid #9b9c9f;
  border-radius: 2px;
}
.vertical .thumb {
  flex-direction: column;
  width: 32px;
  height: 106px;
  background: linear-gradient(to right, #f6f6f7, #e4e4e6 55%, #cfcfd2);
}
.vertical .thumb i {
  width: 15px;
  height: 3px;
  background: #626366;
}
.horizontal .thumb {
  width: 352px;
  height: 32px;
  background: linear-gradient(#f6f6f7, #e4e4e6 55%, #cfcfd2);
}
.horizontal .thumb i {
  width: 3px;
  height: 15px;
  background: #626366;
}
.doc-tabs {
  display: flex;
  align-items: flex-start;
  height: 48px;
  border-top: 1px solid #8596ab;
  background: linear-gradient(#eff6fd, #dbe6f3);
}
.doc-nav {
  display: flex;
  align-items: center;
  gap: 8px;
  height: 47px;
  padding-left: 8px;
}
.doc-nav .bar {
  height: 22px;
  margin: 0 8px 0 4px;
  background: #868d97;
}
.doc-tab {
  width: 237px;
  height: 44px;
  margin: -1px 0 0 10px;
  padding: 0 2px 2px;
  background: #4c5b70;
  clip-path: polygon(0 0, 100% 0, 100% calc(100% - 4px), calc(100% - 4px) 100%, 43px 100%);
}
.doc-tab-inner {
  display: flex;
  align-items: center;
  height: 42px;
  padding-left: 54px;
  background: linear-gradient(#fff, #f7f4f8);
  clip-path: polygon(0 0, 100% 0, 100% calc(100% - 3px), calc(100% - 3px) 100%, 42px 100%);
  font-size: 24px;
  font-weight: 700;
  color: #3d4c78;
}
.doc-tab span {
  flex: 1;
  text-align: center;
}
.doc-tab button {
  margin: 0 20px 6px 0;
}
.doc-next {
  height: 47px;
  margin: 0 19px 0 auto;
}

/* side tabs */
.side-tabs {
  display: flex;
  flex-direction: column;
  width: 40px;
  padding: 15px 3px 4px 0;
}
.side-tabs button {
  flex: 1;
  align-items: stretch;
  padding: 1px 2px 0 0;
  background: #31527f;
  clip-path: polygon(0 0, 28px 0, 100% 9px, 100% 100%, 0 100%);
}
.side-tabs button:last-child {
  padding-bottom: 2px;
}
.face {
  display: flex;
  flex-direction: column;
  align-items: center;
  flex: 1;
  padding-top: 4px;
  background: linear-gradient(to right, #aec4e8, #b9cbe8);
  clip-path: polygon(0 0, 26px 0, 100% 9px, 100% 100%, 0 100%);
}
.name {
  height: 53px;
  margin: 7px 0 0 5px;
  overflow: hidden;
  writing-mode: vertical-rl;
  text-align: left;
  white-space: nowrap;
  color: #35486a;
}

/* status bar */
.status {
  display: flex;
  justify-content: space-between;
  height: 53px;
  border: 1px solid #8798ae;
  background: linear-gradient(#d6e3f1, #c3d2e7 45%, #b7c7e1 60%, #bccce4);
}
.signin {
  gap: 4px;
  padding: 0 0 2px 6px;
}
.signin .arrow {
  margin-left: 5px;
}
.status-tools, .cell {
  display: flex;
}
.cell {
  align-items: center;
  border-left: 1px solid #98a8c0;
}
.overview-cell {
  width: 63px;
  justify-content: center;
}
.filter-cell {
  width: 77px;
  gap: 8px;
  padding-left: 11px;
}
.last {
  padding-left: 10px;
}
.last .arrow-btn {
  margin: 0 6px 0 4px;
}
.view {
  width: 46px;
  height: 42px;
}
.view.on {
  border: 4px solid #f6d070;
  border-radius: 5px;
  outline: 1px solid #cba347;
}
.percent {
  width: 96px;
  text-align: center;
  color: #44516c;
}
.zoom {
  width: 136px;
  height: 32px;
  margin: 0 10px 0 12px;
  appearance: none;
  background: linear-gradient(#8f9fb6, #8f9fb6) center / 100% 1px no-repeat;
}
.zoom::-webkit-slider-thumb {
  appearance: none;
  width: 20px;
  height: 28px;
  background: linear-gradient(#f4f7fb, #dfe7f1) center 2px / 16px 24px no-repeat, #7f8b9d;
  clip-path: polygon(0 0, 100% 0, 100% 65%, 50% 100%, 0 65%);
}
.fit {
  margin: 0 15px 0 10px;
}
.tall {
  height: 51px;
  background: #98a8c0;
}
.split {
  margin-left: 8px;
}
.grip {
  align-self: flex-end;
  margin-left: 17px;
}
```
